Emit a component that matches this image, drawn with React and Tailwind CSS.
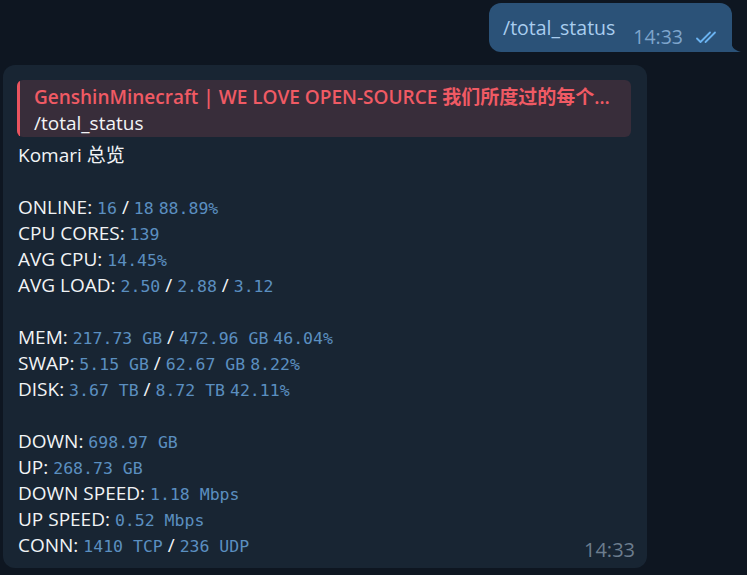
import React from "react";

const sans = "font-['Open_Sans','Noto_Sans_CJK_SC',sans-serif]";
const mono = "font-['DejaVu_Sans_Mono',monospace] text-[#5b8fc0] text-[16.5px]";

// one line of the status reply: label + mixed values
function Line({ label, parts }) {
  return (
    <div className="h-[26px] leading-[26px] whitespace-nowrap">
      {label}:{" "}
      {parts.map((p, i) =>
        p === "/" ? (
          <span key={i}> / </span>
        ) : p === " " ? (
          <span key={i}> </span>
        ) : (
          <span key={i} className={mono}>
            {p}
          </span>
        )
      )}
    </div>
  );
}

function Ticks() {
  return (
    <svg width="26" height="14" viewBox="0 0 26 14" fill="none" stroke="#6ab2f0" strokeWidth="1.8" strokeLinecap="round" strokeLinejoin="round">
      <path d="M1 8.5 L4.5 12 L14 2.5" />
      <path d="M9.5 12 L19 2.5" />
    </svg>
  );
}

export default function App() {
  return (
    <div className={`w-[747px] h-[575px] bg-[#0e1621] overflow-hidden ${sans}`}>
      {/* outgoing */}
      <div className="flex justify-end pt-[3px] pr-[15px]">
        <div className="relative h-[49px] w-[243px] bg-[#2b5278] rounded-[12px] rounded-br-none flex items-start pl-[14px] pr-[10px]">
          <span className="text-[19.5px] text-[#a9cdef] leading-[26px] mt-[12px]">/total_status</span>
          <span className="ml-auto text-[19.5px] text-[#7ea5cc] leading-[22px] mt-[23px]">14:33</span>
          <span className="ml-[13px] mt-[27px]">
            <Ticks />
          </span>
          <svg className="absolute right-[-9px] bottom-0" width="10" height="12" viewBox="0 0 10 12">
            <path d="M0 0 C0 7 3 10 10 12 L0 12 Z" fill="#2b5278" />
          </svg>
        </div>
      </div>

      {/* incoming */}
      <div className="mt-[13px] ml-[3px] w-[644px] h-[503px] bg-[#182533] rounded-[12px] relative pt-[15px] pl-[14px] pr-[16px] text-[19px] text-[#f2f4f6]">
        <div className="flex h-[57px] bg-[#382d3a] rounded-[6px] overflow-hidden">
          <div className="w-[3px] bg-[#e9545f]" />
          <div className="pl-[14px] pt-[4px] min-w-0">
            <div className="h-[26px] leading-[26px] text-[#f05a64] font-semibold whitespace-nowrap">
              GenshinMinecraft | WE LOVE OPEN-SOURCE 我们所度过的每个…
            </div>
            <div className="h-[26px] leading-[26px]">/total_status</div>
          </div>
        </div>

        <div className="mt-[5px] pl-[1px]">
          <div className="h-[26px] leading-[26px]">Komari 总览</div>
          <div className="h-[26px]" />
          <Line label="ONLINE" parts={["16", "/", "18", " ", "88.89%"]} />
          <Line label="CPU CORES" parts={["139"]} />
          <Line label="AVG CPU" parts={["14.45%"]} />
          <Line label="AVG LOAD" parts={["2.50", "/", "2.88", "/", "3.12"]} />
          <div className="h-[26px]" />
          <Line label="MEM" parts={["217.73 GB", "/", "472.96 GB", " ", "46.04%"]} />
          <Line label="SWAP" parts={["5.15 GB", "/", "62.67 GB", " ", "8.22%"]} />
          <Line label="DISK" parts={["3.67 TB", "/", "8.72 TB", " ", "42.11%"]} />
          <div className="h-[26px]" />
          <Line label="DOWN" parts={["698.97 GB"]} />
          <Line label="UP" parts={["268.73 GB"]} />
          <Line label="DOWN SPEED" parts={["1.18 Mbps"]} />
          <Line label="UP SPEED" parts={["0.52 Mbps"]} />
          <Line label="CONN" parts={["1410 TCP", "/", "236 UDP"]} />
        </div>

        <span className="absolute right-[12px] bottom-[7px] text-[20px] leading-[22px] text-[#6c7d8e]">14:33</span>
      </div>
    </div>
  );
}
